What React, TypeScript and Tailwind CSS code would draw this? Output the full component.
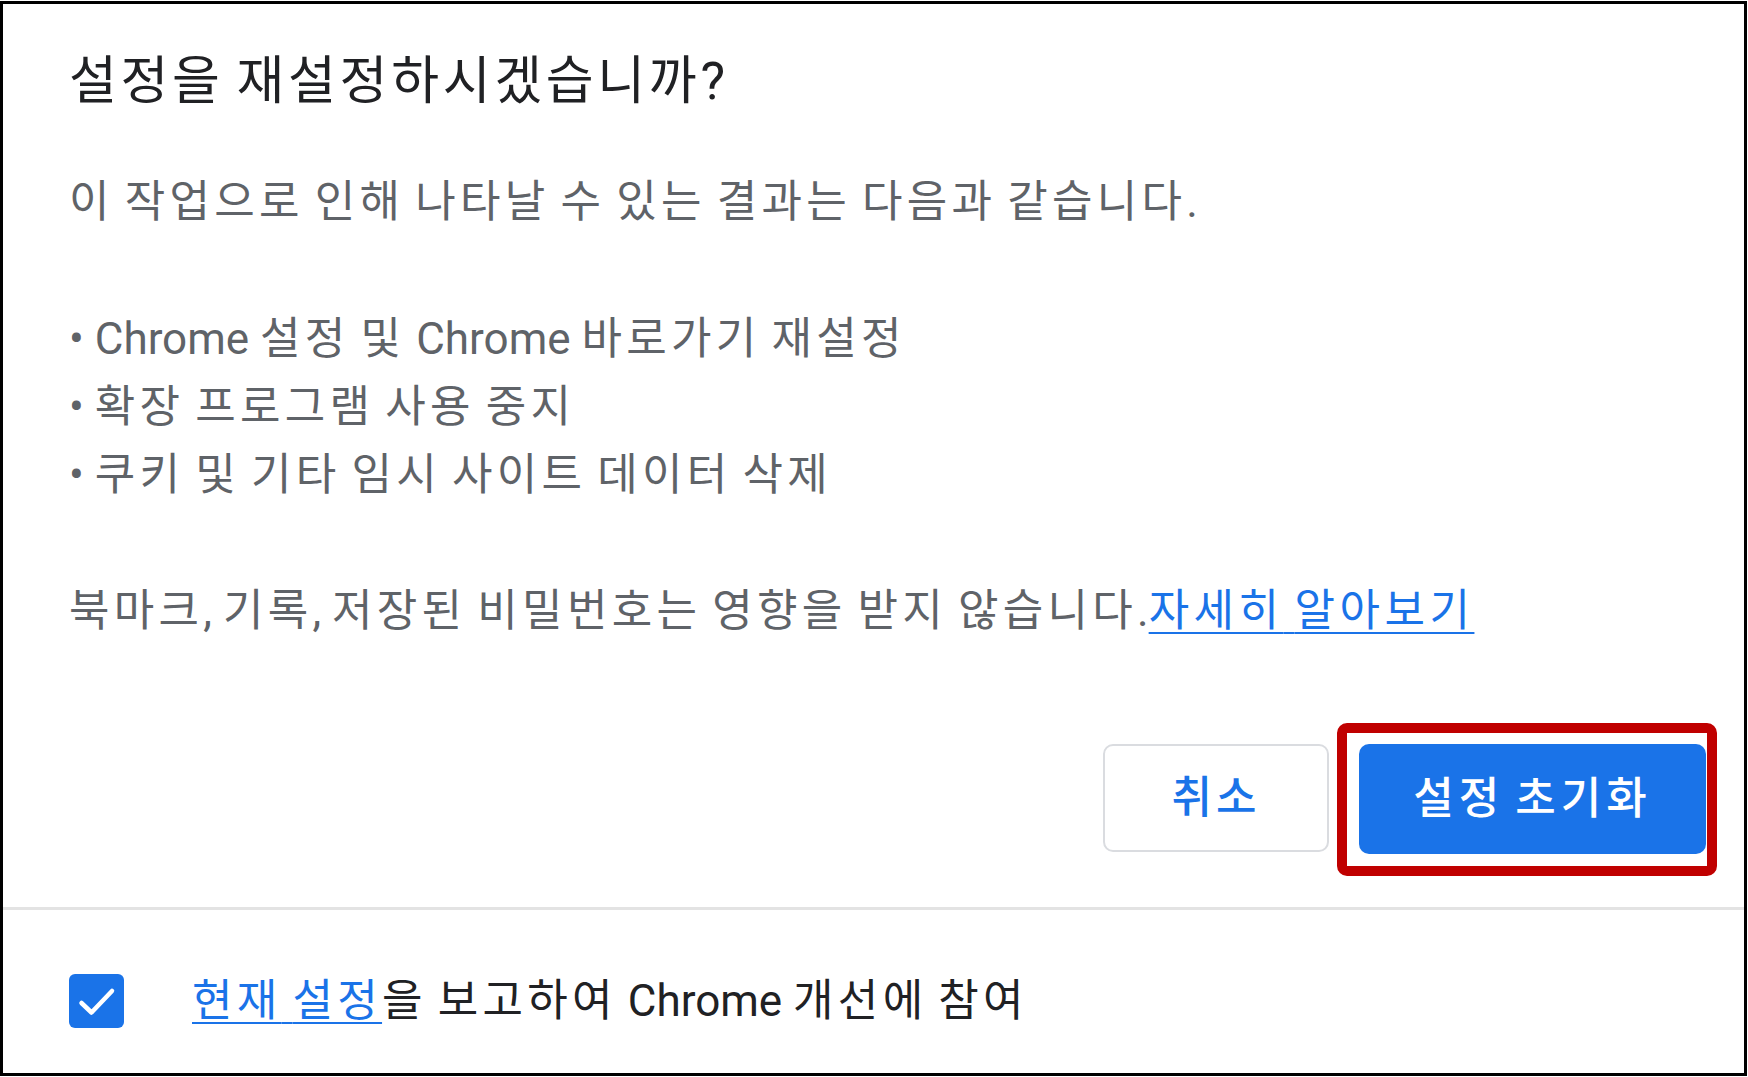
import React from "react";

const FONT = "font-['Roboto','Noto_Sans_CJK_KR',sans-serif]";

function K({ t, sp = "tracking-[4.3px]" }: { t: string; sp?: string }) {
  const parts = t.split(/([\uAC00-\uD7A3]+)/);
  return (
    <>
      {parts.map((p, i) =>
        /[\uAC00-\uD7A3]/.test(p) ? (
          <span key={i} className={sp}>
            {p}
          </span>
        ) : (
          <React.Fragment key={i}>{p}</React.Fragment>
        )
      )}
    </>
  );
}

export default function App() {
  return (
    <div className={`w-[1748px] h-[1077px] bg-white ${FONT}`}>
      <div className="w-[1747px] h-[1075px] mt-[1px] border-[3px] border-black flex flex-col">
        <div className="pl-[66px] pr-[38px] pt-[46px]">
          <h1 className="text-[52px] leading-[64px] text-[#202124] font-normal">
            <K t="설정을 재설정하시겠습니까?" sp="tracking-[3.7px]" />
          </h1>
          <p className="mt-[56px] text-[44px] leading-[64px] text-[#5f6368]">
            <K t="이 작업으로 인해 나타날 수 있는 결과는 다음과 같습니다." />
          </p>
          <ul className="mt-[71px] text-[44px] leading-[68px] text-[#5f6368]">
            <li>
              <K t="• Chrome 설정 및 Chrome 바로가기 재설정" />
            </li>
            <li>
              <K t="• 확장 프로그램 사용 중지" />
            </li>
            <li>
              <K t="• 쿠키 및 기타 임시 사이트 데이터 삭제" />
            </li>
          </ul>
          <p className="mt-[70px] text-[44px] leading-[64px] text-[#5f6368]">
            <K t="북마크, 기록, 저장된 비밀번호는 영향을 받지 않습니다." />
            <span className="text-[#1a73e8] underline underline-offset-[6px] decoration-[2px]">
              <K t="자세히 알아보기" sp="tracking-[4.5px]" />
            </span>
          </p>
          <div className="mt-[101px] flex justify-end gap-[30px]">
            <button className="w-[226px] h-[108px] rounded-[10px] border-2 border-[#dadce0] bg-white text-[44px] font-medium text-[#1a73e8]">
              <K t="취소" sp="tracking-[4px]" />
            </button>
            <div className="relative">
              <button className="w-[347px] h-[110px] rounded-[10px] bg-[#1a73e8] text-[44px] font-medium text-white">
                <K t="설정 초기화" sp="tracking-[5px]" />
              </button>
              <div className="absolute -left-[22px] -right-[11px] -top-[21px] -bottom-[22px] border-[10px] border-[#c00000] rounded-[10px] pointer-events-none" />
            </div>
          </div>
        </div>
        <div className="mt-[53px] h-[3px] bg-[#e3e3e3]" />
        <div className="flex-1 flex items-center pl-[66px] pt-[18px]">
          <div className="w-[55px] h-[54px] rounded-[6px] bg-[#1a73e8] flex items-center justify-center">
            <svg width="55" height="54" viewBox="0 0 55 54" fill="none">
              <path
                d="M12.5 29L22.5 38.5L43 17"
                stroke="white"
                strokeWidth="4.5"
                strokeLinecap="round"
                strokeLinejoin="round"
              />
            </svg>
          </div>
          <p className="ml-[68px] text-[44px] leading-[64px] text-[#202124]">
            <span className="text-[#1a73e8] underline underline-offset-[6px] decoration-[2px]">
              <K t="현재 설정" />
            </span>
            <K t="을 보고하여 Chrome 개선에 참여" />
          </p>
        </div>
      </div>
    </div>
  );
}
